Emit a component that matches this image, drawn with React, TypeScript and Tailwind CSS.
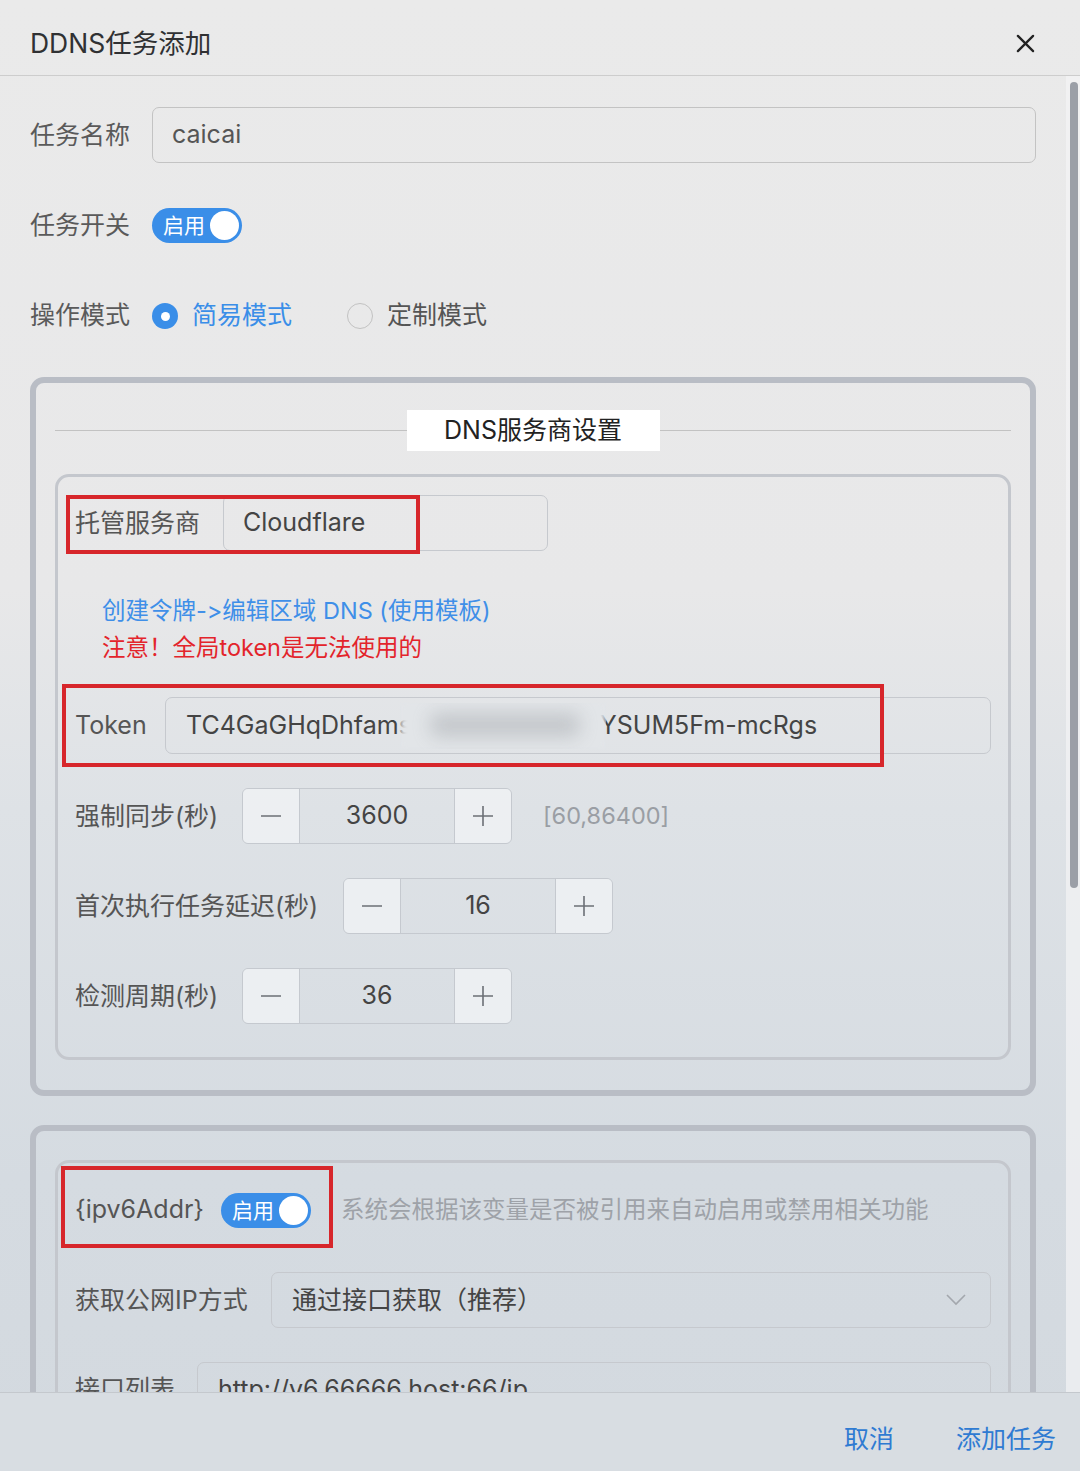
import React from "react";

const FONT = { fontFamily: 'Inter, "Noto Sans CJK SC", "Noto Sans", sans-serif' };

function Switch() {
  return (
    <div className="flex h-[35px] w-[90px] items-center justify-between rounded-full bg-[#3a8ee8] pl-[11px] pr-[3px]">
      <span className="text-[21px] leading-none text-white">启用</span>
      <span className="h-[29px] w-[29px] rounded-full bg-white" />
    </div>
  );
}

function Minus() {
  return (
    <svg width="22" height="22" viewBox="0 0 22 22">
      <line x1="1" y1="11" x2="21" y2="11" stroke="#6b6f75" strokeWidth="1.6" />
    </svg>
  );
}
function Plus() {
  return (
    <svg width="22" height="22" viewBox="0 0 22 22">
      <line x1="1" y1="11" x2="21" y2="11" stroke="#6b6f75" strokeWidth="1.6" />
      <line x1="11" y1="1" x2="11" y2="21" stroke="#6b6f75" strokeWidth="1.6" />
    </svg>
  );
}

function NumberInput({ value }: { value: string }) {
  return (
    <div className="flex h-[56px] w-[270px] overflow-hidden rounded-[6px] border border-[#c5c9cf]">
      <div className="flex w-[57px] items-center justify-center border-r border-[#c5c9cf] bg-[#f0f2f5]/80">
        <Minus />
      </div>
      <div className="flex flex-1 items-center justify-center text-[25px] text-[#444]">{value}</div>
      <div className="flex w-[57px] items-center justify-center border-l border-[#c5c9cf] bg-[#f0f2f5]/80">
        <Plus />
      </div>
    </div>
  );
}

function RedBox({ className }: { className: string }) {
  return <div className={"pointer-events-none absolute border-[4px] border-[#d7262b] " + className} />;
}

export default function App() {
  return (
    <div
      style={FONT}
      className="flex h-[1471px] w-[1080px] flex-col overflow-hidden bg-[linear-gradient(180deg,#eaeaea_0%,#e8e8e9_40%,#dee2e6_55%,#d5dbe1_80%,#d3d9df_100%)] text-[#555] [font-feature-settings:'calt'_0,'liga'_0]"
    >
      {/* Header */}
      <div className="flex h-[76px] shrink-0 items-center justify-between border-b border-[#cdcdcd] pl-[30px] pr-[45px] pt-[12px]">
        <span className="text-[26.5px] text-[#303133]">DDNS任务添加</span>
        <svg width="19" height="19" viewBox="0 0 20 20">
          <line x1="2" y1="2" x2="18" y2="18" stroke="#222" strokeWidth="2.4" strokeLinecap="round" />
          <line x1="18" y1="2" x2="2" y2="18" stroke="#222" strokeWidth="2.4" strokeLinecap="round" />
        </svg>
      </div>

      {/* Body */}
      <div className="relative flex-1 overflow-hidden">
        <div className="pl-[30px] pr-[44px] pt-[31px]">
          {/* 任务名称 */}
          <div className="flex h-[56px] items-center">
            <span className="w-[122px] shrink-0 pt-[2px] text-[25px] text-[#5a5a5a]">任务名称</span>
            <div className="flex h-[56px] flex-1 items-center rounded-[7px] border-[1.5px] border-[#c3c3c3] pl-[19px] text-[25px] text-[#555]">
              caicai
            </div>
          </div>

          {/* 任务开关 */}
          <div className="mt-[34px] flex h-[56px] items-center">
            <span className="w-[122px] shrink-0 pt-[2px] text-[25px] text-[#5a5a5a]">任务开关</span>
            <Switch />
          </div>

          {/* 操作模式 */}
          <div className="mt-[34px] flex h-[56px] items-center pt-[2px]">
            <span className="w-[122px] shrink-0 text-[25px] text-[#5a5a5a]">操作模式</span>
            <div className="flex items-center">
              <span className="flex h-[26px] w-[26px] items-center justify-center rounded-full bg-[#3a8ee8]">
                <span className="h-[9px] w-[9px] rounded-full bg-white" />
              </span>
              <span className="ml-[14px] text-[25px] text-[#3a8ee8]">简易模式</span>
            </div>
            <div className="ml-[55px] flex items-center">
              <span className="h-[26px] w-[26px] rounded-full border-[1.5px] border-[#c2c2c2]" />
              <span className="ml-[14px] text-[25px] text-[#555]">定制模式</span>
            </div>
          </div>

          {/* Fieldset 1 */}
          <div className="mt-[34px] rounded-[14px] border-[6px] border-[#b9bdc5] px-[19px] pb-[30px] pt-[27px]">
            <div className="flex h-[41px] items-center">
              <div className="flex-1 border-t-[1.5px] border-[#c2c2c2]" />
              <div className="flex h-[41px] w-[253px] items-center justify-center bg-white text-[25px] text-[#222]">
                DNS服务商设置
              </div>
              <div className="flex-1 border-t-[1.5px] border-[#c2c2c2]" />
            </div>

            <div className="mt-[23px] rounded-[14px] border-[3px] border-[#c4c7cd] px-[17px] pb-[33px] pt-[18px]">
              {/* 托管服务商 */}
              <div className="relative flex h-[56px] items-center">
                <span className="w-[148px] shrink-0 pt-[2px] text-[25px] text-[#555]">托管服务商</span>
                <div className="flex h-[56px] w-[325px] items-center rounded-[7px] border-[1.5px] border-[#c6c9ce] pl-[19px] text-[25px] text-[#444]">
                  Cloudflare
                </div>
                <RedBox className="left-[-9px] top-[0px] h-[59px] w-[354px]" />
              </div>

              {/* links */}
              <div className="mt-[41px] pl-[27px] text-[23.5px] leading-[37px]">
                <div className="text-[#3f8fe8]">创建令牌-&gt;编辑区域 DNS (使用模板)</div>
                <div className="text-[#e3242b]">注意！全局token是无法使用的</div>
              </div>

              {/* Token */}
              <div className="relative mt-[31px] flex h-[57px] items-center">
                <span className="w-[90px] shrink-0 text-[25px] text-[#555]">Token</span>
                <div className="flex h-[57px] flex-1 items-center overflow-hidden whitespace-nowrap rounded-[7px] border-[1.5px] border-[#c6c9ce] pl-[20px] text-[25px] text-[#444]">
                  <span>TC4GaGHqDhfams</span>
                  <span className="relative ml-[-12px] mr-[-6px] inline-block h-[46px] w-[206px] overflow-hidden">
                    <span className="absolute inset-0 bg-[#e2e5e8] blur-[3px]" />
                    <span className="absolute left-[30px] top-[10px] h-[24px] w-[150px] rounded-[8px] bg-[#8e9298] opacity-35 blur-[9px]" />
                  </span>
                  <span>YSUM5Fm-mcRgs</span>
                </div>
                <RedBox className="left-[-13px] top-[-13px] h-[83px] w-[822px]" />
              </div>

              {/* 强制同步 */}
              <div className="mt-[34px] flex h-[56px] items-center">
                <span className="w-[167px] shrink-0 pt-[2px] text-[25px] text-[#555]">强制同步(秒)</span>
                <NumberInput value="3600" />
                <span className="ml-[31px] text-[23.5px] text-[#9a9ea4]">[60,86400]</span>
              </div>

              {/* 首次执行任务延迟 */}
              <div className="mt-[34px] flex h-[56px] items-center">
                <span className="w-[268px] shrink-0 pt-[2px] text-[25px] text-[#555]">首次执行任务延迟(秒)</span>
                <NumberInput value="16" />
              </div>

              {/* 检测周期 */}
              <div className="mt-[34px] flex h-[56px] items-center">
                <span className="w-[167px] shrink-0 pt-[2px] text-[25px] text-[#555]">检测周期(秒)</span>
                <NumberInput value="36" />
              </div>
            </div>
          </div>

          {/* Fieldset 2 */}
          <div className="mt-[29px] rounded-[14px] border-[6px] border-[#b9bdc5] px-[19px] pb-[30px] pt-[29px]">
            <div className="rounded-[14px] border-[3px] border-[#c4c7cd] px-[17px] pb-[33px] pt-[19px]">
              <div className="relative flex h-[56px] items-center">
                <span className="w-[146px] shrink-0 text-[25px] text-[#555]">{"{ipv6Addr}"}</span>
                <Switch />
                <span className="ml-[30px] text-[23.5px] text-[#9ea2a8]">系统会根据该变量是否被引用来自动启用或禁用相关功能</span>
                <RedBox className="left-[-14px] top-[-16px] h-[82px] w-[272px]" />
              </div>

              <div className="mt-[34px] flex h-[56px] items-center">
                <span className="w-[196px] shrink-0 pt-[2px] text-[25px] text-[#555]">获取公网IP方式</span>
                <div className="flex h-[56px] flex-1 items-center justify-between rounded-[7px] border-[1.5px] border-[#c6c9ce] pl-[20px] pr-[24px] text-[25px] text-[#444]">
                  <span className="pt-[2px]">通过接口获取（推荐）</span>
                  <svg width="20" height="12" viewBox="0 0 20 12">
                    <polyline points="1,1 10,10 19,1" fill="none" stroke="#a3a7ad" strokeWidth="1.6" />
                  </svg>
                </div>
              </div>

              <div className="mt-[34px] flex h-[56px] items-center">
                <span className="w-[122px] shrink-0 text-[25px] text-[#555]">接口列表</span>
                <div className="flex h-[56px] flex-1 items-center rounded-[7px] border-[1.5px] border-[#c6c9ce] pl-[20px] text-[25px] text-[#444]">
                  http://v6.66666.host:66/ip
                </div>
              </div>
            </div>
          </div>
        </div>

        {/* scrollbar */}
        <div className="absolute bottom-0 right-0 top-0 w-[14px] bg-[#f3f4f5]/70">
          <div className="absolute left-[4px] top-[6px] h-[806px] w-[8px] rounded-full bg-[#9b9fa7]" />
        </div>
      </div>

      {/* Footer */}
      <div className="flex h-[79px] shrink-0 items-center justify-end gap-[62px] border-t border-[#c4c8cd] bg-[#d8dde2] pr-[24px] pt-[16px]">
        <span className="text-[25px] text-[#2f7bd2]">取消</span>
        <span className="text-[25px] text-[#2f7bd2]">添加任务</span>
      </div>
    </div>
  );
}
